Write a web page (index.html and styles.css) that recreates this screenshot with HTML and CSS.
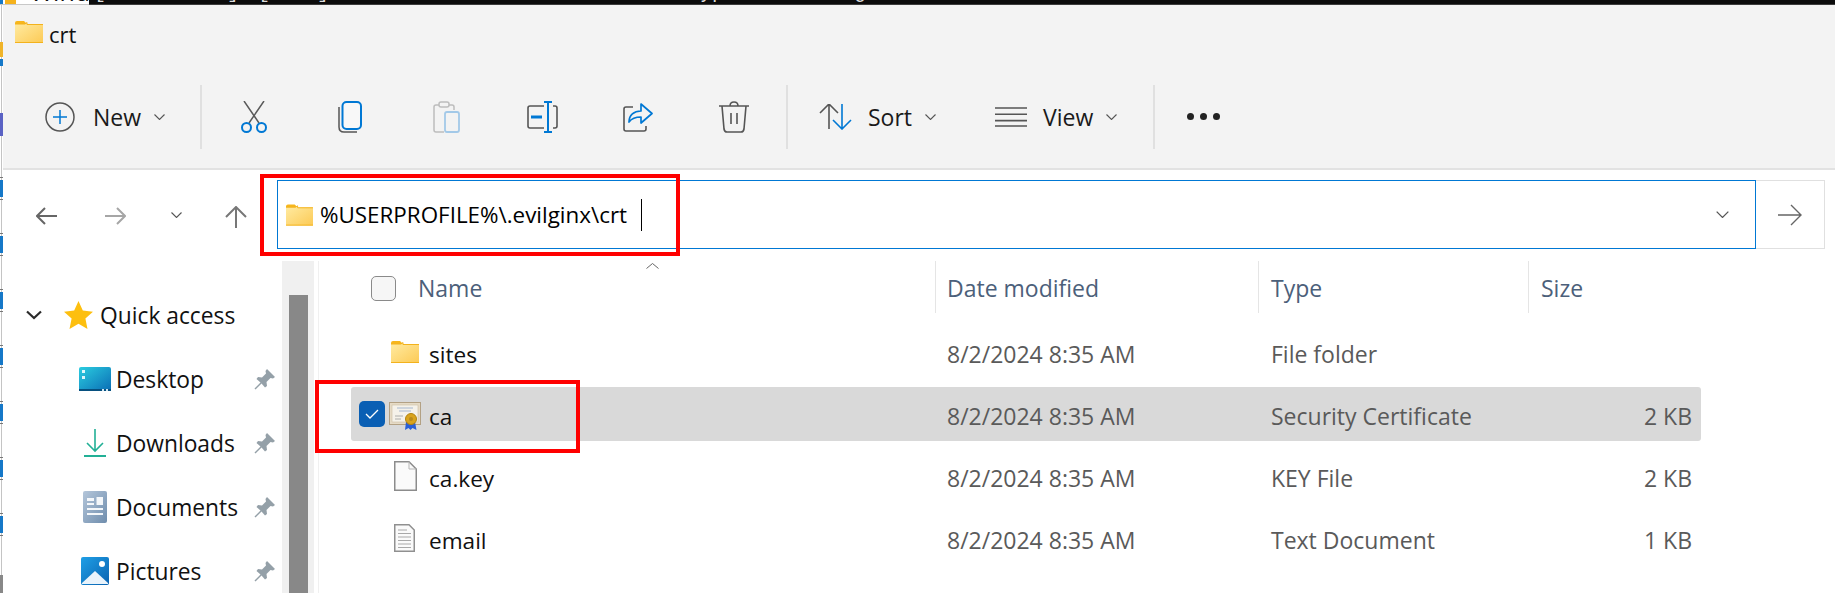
FILE: index.html
```html
<!DOCTYPE html>
<html lang="en">
<head>
    <meta charset="UTF-8">
    <title>crt</title>
    <link rel="stylesheet" href="styles.css">
</head>
<body>
    <svg class="defs" width="0" height="0">
        <defs>
            <linearGradient id="folderFill" x1="0" y1="0" x2="1" y2="1">
                <stop offset="0" stop-color="#ffeaa0"/>
                <stop offset="1" stop-color="#fcca55"/>
            </linearGradient>
            <linearGradient id="deskFill" x1="0" y1="0" x2="1" y2="1">
                <stop offset="0" stop-color="#2bcde0"/>
                <stop offset="1" stop-color="#0a6db5"/>
            </linearGradient>
            <linearGradient id="docFill" x1="0" y1="0" x2="1" y2="1">
                <stop offset="0" stop-color="#b4c6da"/>
                <stop offset="1" stop-color="#6f8dad"/>
            </linearGradient>
            <linearGradient id="picFill" x1="0" y1="0" x2="1" y2="1">
                <stop offset="0" stop-color="#1f9fe6"/>
                <stop offset="1" stop-color="#0a62b0"/>
            </linearGradient>
            <symbol id="folder" viewBox="0 0 28 22">
                <path d="M0 2 Q0 0 2 0 H9 L12 3 H0 Z" fill="#f7b61c"/>
                <path d="M0 3 H27 Q28 3 28 4 V21 Q28 22 27 22 H1 Q0 22 0 21 Z" fill="url(#folderFill)"/>
                <path d="M0 3 H10 L12 1.500 V3.500 H28 M0 21.500 H28" fill="none" stroke="#f3b21c" stroke-width="1"/>
            </symbol>
            <symbol id="pin" viewBox="0 0 21 21">
                <path d="M13 0 L21 8 L19 9.500 L16.500 9 L12.500 13 L13 17 L11 18.500 L7.500 14.500 L1.500 20.500 L0.500 19.500 L6.500 13.500 L2.500 10 L4 8 L8 8.500 L12 4.500 L11.500 2 Z" fill="#94a0a8"/>
            </symbol>
            <symbol id="chev" viewBox="0 0 11 6">
                <path d="M0.500 0.500 L5.500 5.500 L10.500 0.500" fill="none" stroke="#555" stroke-width="1.100"/>
            </symbol>
        </defs>
    </svg>

    <div class="top-strip">
        <div class="strip-left">
            <span class="strip-icon"></span>
            <span class="strip-title">Windows</span>
        </div>
        <div class="strip-term">
            <span class="t-a">[</span><span class="t-b">]</span><span class="t-c">[</span><span class="t-d">]</span><span class="t-e">Type</span><span class="t-f">g</span>
        </div>
    </div>

    <div class="main">
        <div class="edge">
            <i class="e-yellow"></i>
            <i class="e-blue"></i>
            <i class="e-purple"></i>
            <i class="tile"></i><i class="tile"></i><i class="tile"></i><i class="tile"></i><i class="tile"></i><i class="tile"></i><i class="tile"></i>
            <i class="e-gray"></i>
        </div>

        <div class="window">
            <div class="titlebar">
                <svg class="ic-folder"><use href="#folder"/></svg>
                <span class="title-text">crt</span>
            </div>

            <div class="toolbar">
                <div class="tb-new">
                    <svg width="30" height="30" viewBox="0 0 30 30">
                        <circle cx="15" cy="15" r="14" fill="none" stroke="#555" stroke-width="1.500"/>
                        <path d="M15 8 V22 M8 15 H22" stroke="#0078d4" stroke-width="1.500"/>
                    </svg>
                    <span class="tb-label new-label">New</span>
                    <svg class="tb-chev"><use href="#chev"/></svg>
                </div>
                <div class="tb-sep"></div>
                <div class="tb-btn">
                    <svg width="28" height="32" viewBox="0 0 28 32">
                        <path d="M4 0 L19 22 M24 0 L9 22" fill="none" stroke="#5a5a5a" stroke-width="1.500"/>
                        <circle cx="6.500" cy="26.500" r="4.500" fill="none" stroke="#0078d4" stroke-width="2"/>
                        <circle cx="21.500" cy="26.500" r="4.500" fill="none" stroke="#0078d4" stroke-width="2"/>
                    </svg>
                </div>
                <div class="tb-btn">
                    <svg width="24" height="32" viewBox="0 0 24 32">
                        <path d="M1 6 V26 Q1 31 6 31 H19" fill="none" stroke="#555" stroke-width="1.500"/>
                        <rect x="4.500" y="1" width="18.500" height="27" rx="4" fill="#f8f8f8" stroke="#0078d4" stroke-width="2"/>
                    </svg>
                </div>
                <div class="tb-btn">
                    <svg width="27" height="32" viewBox="0 0 27 32">
                        <path d="M6 4 H3 Q1 4 1 6 V29 Q1 31 3 31 H11 M16 4 H19 Q21 4 21 6 V9" fill="none" stroke="#bdbdbd" stroke-width="1.500"/>
                        <rect x="6" y="1" width="10" height="5" rx="2" fill="none" stroke="#bdbdbd" stroke-width="1.500"/>
                        <rect x="12" y="11" width="14" height="20" rx="2" fill="none" stroke="#a3c9e8" stroke-width="1.800"/>
                    </svg>
                </div>
                <div class="tb-btn">
                    <svg width="31" height="32" viewBox="0 0 31 32">
                        <path d="M17 5 H3 Q1 5 1 7 V25 Q1 27 3 27 H17 M26 5 H28 Q30 5 30 7 V25 Q30 27 28 27 H26" fill="none" stroke="#555" stroke-width="1.600"/>
                        <path d="M17 1 H25 M21 1 V31 M17 31 H25" fill="none" stroke="#0078d4" stroke-width="2"/>
                        <path d="M4 16 H15" stroke="#0078d4" stroke-width="3"/>
                    </svg>
                </div>
                <div class="tb-btn">
                    <svg width="30" height="30" viewBox="0 0 30 30">
                        <path d="M10 5 H3 Q1 5 1 7 V27 Q1 29 3 29 H21 Q23 29 23 27 V24" fill="none" stroke="#555" stroke-width="1.600"/>
                        <path d="M6 20 C6 13 11 9 18 9 V2 L29 11.500 L18 21 V15 C13 15 9 16 6 20 Z" fill="none" stroke="#0078d4" stroke-width="1.700" stroke-linejoin="round"/>
                    </svg>
                </div>
                <div class="tb-btn">
                    <svg width="30" height="32" viewBox="0 0 30 32">
                        <path d="M0 5 H30 M11 5 Q11 1 15 1 Q19 1 19 5 M3 5 L5 28 Q5.500 31 8 31 H22 Q24.500 31 25 28 L27 5 M12 12 V23 M18 12 V23" fill="none" stroke="#555" stroke-width="1.600"/>
                    </svg>
                </div>
                <div class="tb-sep"></div>
                <svg class="ic-sort" width="33" height="26" viewBox="0 0 33 26">
                    <path d="M1 10 L10 1 L19 10 M10 1 V26" fill="none" stroke="#555" stroke-width="1.600" transform="translate(0 -1)"/>
                    <path d="M14 16 L23 25 L32 16 M23 25 V0" fill="none" stroke="#0078d4" stroke-width="1.600"/>
                </svg>
                <span class="tb-label sort-label">Sort</span>
                <svg class="tb-chev"><use href="#chev"/></svg>
                <svg class="ic-view" width="32" height="20" viewBox="0 0 32 20">
                    <path d="M0 1 H32 M0 7.300 H32 M0 13.600 H32 M0 19 H32" stroke="#555" stroke-width="1.600"/>
                </svg>
                <span class="tb-label view-label">View</span>
                <svg class="tb-chev"><use href="#chev"/></svg>
                <div class="tb-sep sep-view"></div>
                <div class="tb-dots"><i></i><i></i><i></i></div>
            </div>

            <div class="nav">
                <svg class="nav-back" width="21" height="18" viewBox="0 0 21 18">
                    <path d="M21 9 H1 M9 1 L1 9 L9 17" fill="none" stroke="#666" stroke-width="2"/>
                </svg>
                <svg class="nav-fwd" width="21" height="18" viewBox="0 0 21 18">
                    <path d="M0 9 H20 M12 1 L20 9 L12 17" fill="none" stroke="#a6a6a6" stroke-width="2"/>
                </svg>
                <svg class="nav-chev" width="11" height="6"><use href="#chev"/></svg>
                <svg class="nav-up" width="22" height="22" viewBox="0 0 22 22">
                    <path d="M11 22 V1 M1 11 L11 1 L21 11" fill="none" stroke="#777" stroke-width="2"/>
                </svg>
                <div class="address">
                    <svg class="ic-addr"><use href="#folder"/></svg>
                    <span class="addr-text">%USERPROFILE%\.evilginx\crt</span>
                    <i class="caret"></i>
                    <svg class="addr-chev"><use href="#chev"/></svg>
                </div>
                <div class="go">
                    <svg width="24" height="22" viewBox="0 0 24 22">
                        <path d="M0 11 H23 M13 1 L23 11 L13 21" fill="none" stroke="#666" stroke-width="1.400"/>
                    </svg>
                </div>
            </div>

            <div class="content">
                <div class="sidebar">
                    <div class="side-head">
                        <svg class="side-chev" width="16" height="10" viewBox="0 0 16 10">
                            <path d="M1 1.500 L8 8 L15 1.500" fill="none" stroke="#2b2b2b" stroke-width="2.200"/>
                        </svg>
                        <svg class="side-star" width="29" height="28" viewBox="0 0 29 28">
                            <path d="M14.500 0 L18.800 9.600 L29 10.700 L21.400 17.600 L23.500 28 L14.500 22.700 L5.500 28 L7.600 17.600 L0 10.700 L10.200 9.600 Z" fill="#fdbf0f"/>
                        </svg>
                        <span>Quick access</span>
                    </div>
                    <div class="side-item">
                        <span class="side-icon">
                            <svg width="32" height="24" viewBox="0 0 32 24">
                                <rect width="32" height="24" rx="2" fill="url(#deskFill)"/>
                                <rect y="22" width="32" height="2" fill="#07507f"/>
                                <rect x="3" y="3" width="3" height="3" fill="#dff6fb"/>
                                <rect x="3" y="9" width="3" height="3" fill="#dff6fb"/>
                                <rect x="23" y="22" width="2" height="2" fill="#cfe8f5"/>
                                <rect x="27" y="22" width="2" height="2" fill="#cfe8f5"/>
                            </svg>
                        </span>
                        <span>Desktop</span>
                        <svg class="pin"><use href="#pin"/></svg>
                    </div>
                    <div class="side-item">
                        <span class="side-icon">
                            <svg width="22" height="28" viewBox="0 0 22 28">
                                <path d="M11 0 V21 M3 14 L11 22 L19 14" fill="none" stroke="#22b096" stroke-width="1.600"/>
                                <path d="M0 27 H22" stroke="#22b096" stroke-width="2"/>
                            </svg>
                        </span>
                        <span>Downloads</span>
                        <svg class="pin"><use href="#pin"/></svg>
                    </div>
                    <div class="side-item">
                        <span class="side-icon">
                            <svg width="24" height="32" viewBox="0 0 24 32">
                                <rect width="24" height="32" rx="2" fill="url(#docFill)"/>
                                <path d="M4 7 H11 V10 H4 Z M4 12 H11 V14 H4 Z M13.500 6 H20 V14 H13.500 Z M4 17 H20 V19 H4 Z M4 22 H20 V24 H4 Z" fill="#f4f7fa"/>
                            </svg>
                        </span>
                        <span>Documents</span>
                        <svg class="pin"><use href="#pin"/></svg>
                    </div>
                    <div class="side-item">
                        <span class="side-icon">
                            <svg width="28" height="28" viewBox="0 0 28 28">
                                <rect width="28" height="28" rx="2" fill="url(#picFill)"/>
                                <circle cx="21" cy="7" r="3" fill="#fff"/>
                                <path d="M1 26 L14 14 L27 26 V27 H1 Z" fill="#e9f3fb"/>
                            </svg>
                        </span>
                        <span>Pictures</span>
                        <svg class="pin"><use href="#pin"/></svg>
                    </div>
                </div>

                <div class="scroll-track"><div class="scroll-thumb"></div></div>

                <div class="list">
                    <div class="list-head">
                        <div class="col-name">
                            <i class="head-check"></i>
                            <span>Name</span>
                            <svg class="sort-caret" width="13" height="6" viewBox="0 0 13 6">
                                <path d="M0.500 5.500 L6.500 0.500 L12.500 5.500" fill="none" stroke="#666" stroke-width="1"/>
                            </svg>
                        </div>
                        <div class="col-head">Date modified</div>
                        <div class="col-head">Type</div>
                        <div class="col-head">Size</div>
                    </div>

                    <div class="file-row">
                        <div class="file-name">
                            <svg class="ic-file-folder"><use href="#folder"/></svg>
                            <span>sites</span>
                        </div>
                        <div class="cell">8/2/2024 8:35 AM</div>
                        <div class="cell">File folder</div>
                        <div class="cell cell-size"></div>
                    </div>

                    <div class="file-row selected">
                        <div class="file-name">
                            <i class="row-check">
                                <svg width="14" height="10" viewBox="0 0 14 10">
                                    <path d="M1 5 L5 9 L13 1" fill="none" stroke="#fff" stroke-width="1.300"/>
                                </svg>
                            </i>
                            <svg class="ic-cert" width="32" height="28" viewBox="0 0 32 28">
                                <rect x="0.500" y="0.500" width="31" height="22" fill="#e6dbc6" stroke="#b3a184"/>
                                <rect x="3" y="3" width="26" height="17" fill="#f5f2ea" stroke="#cbbda2" stroke-width="0.600"/>
                                <path d="M8 6 H24 M10 9 H22" stroke="#9fb0cc" stroke-width="0.900"/>
                                <path d="M6 14 H14 M6 17 H12" stroke="#a5a5a5" stroke-width="0.900"/>
                                <path d="M17 20 L16 28 L19.500 26 L21.500 28 L23.500 26 L27.500 28 L26 20 Z" fill="#2a5fd6"/>
                                <circle cx="22" cy="17" r="5.500" fill="#d9a31c" stroke="#b2830f"/>
                                <circle cx="22" cy="17" r="2" fill="#b98a1a"/>
                            </svg>
                            <span>ca</span>
                        </div>
                        <div class="cell">8/2/2024 8:35 AM</div>
                        <div class="cell">Security Certificate</div>
                        <div class="cell cell-size">2 KB</div>
                    </div>

                    <div class="file-row">
                        <div class="file-name">
                            <svg class="ic-page" width="23" height="30" viewBox="0 0 23 30">
                                <path d="M0.750 0.750 H15 L22.250 8 V29.250 H0.750 Z" fill="#fafafa" stroke="#8c8c8c" stroke-width="1.500"/>
                                <path d="M15 0.750 V8 H22.250" fill="none" stroke="#b5b5b5"/>
                            </svg>
                            <span>ca.key</span>
                        </div>
                        <div class="cell">8/2/2024 8:35 AM</div>
                        <div class="cell">KEY File</div>
                        <div class="cell cell-size">2 KB</div>
                    </div>

                    <div class="file-row">
                        <div class="file-name">
                            <svg class="ic-text" width="21" height="28" viewBox="0 0 21 28">
                                <path d="M0.750 0.750 H15 L20.250 6 V27.250 H0.750 Z" fill="#fafafa" stroke="#909090" stroke-width="1.500"/>
                                <path d="M4 6 H13 M4 9.500 H17 M4 13 H17 M4 16.500 H17 M4 20 H17 M4 23.500 H17" stroke="#a8a8a8" stroke-width="1"/>
                            </svg>
                            <span>email</span>
                        </div>
                        <div class="cell">8/2/2024 8:35 AM</div>
                        <div class="cell">Text Document</div>
                        <div class="cell cell-size">1 KB</div>
                    </div>
                </div>
            </div>
        </div>
    </div>

    <div class="mark mark-address"></div>
    <div class="mark mark-file"></div>
</body>
</html>
```

FILE: styles.css
```css
* {
    box-sizing: border-box;
}
html, body {
    margin: 0;
    height: 593px;
    overflow: hidden;
}
body {
    position: relative;
    font-family: 'Open Sans', 'Noto Sans', sans-serif;
    font-size: 22.8px;
    color: #111;
    background-color: #fff;
}
svg {
    display: block;
    flex: none;
}
.defs {
    position: absolute;
}

/* what shows of the windows behind */
.top-strip {
    display: flex;
    height: 5px;
    overflow: hidden;
}
.strip-left {
    display: flex;
    width: 89px;
    flex: none;
    overflow: hidden;
    border-bottom: 1px solid #c8c8c8;
}
.strip-icon {
    width: 16px;
    height: 4px;
    flex: none;
    background: linear-gradient(90deg, #1578c8 3px, #fff 3px, #fff 5px, #f5b21c 5px);
}
.strip-title {
    margin: -26px 0 0 14px;
    font-size: 25px;
    line-height: 34px;
    white-space: nowrap;
}
.strip-term {
    display: flex;
    flex: 1;
    background-color: #0c0c0c;
    border-bottom: 1px solid #3c3c3c;
    color: #ddd;
    font-family: 'Liberation Mono', monospace;
    font-size: 20px;
}
.strip-term span {
    margin-top: -17px;
    line-height: 20px;
}
.strip-term .t-a { margin-left: 5px; }
.strip-term .t-b { margin-left: 121px; }
.strip-term .t-c { margin-left: 19px; }
.strip-term .t-d { margin-left: 47px; }
.strip-term .t-e { margin-left: 359px; }
.strip-term .t-f { margin-left: 118px; }

.main {
    display: flex;
    height: 588px;
}
.edge {
    display: flex;
    flex-direction: column;
    width: 3px;
    background: linear-gradient(90deg, #fff 1px, #c4c4c4 1px, #c4c4c4 2px, #fff 2px);
    flex: none;
}
.edge i {
    display: block;
    flex: none;
    width: 3px;
}
.edge .e-yellow {
    height: 15px;
    margin-top: 37px;
    background-color: #f0b429;
}
.edge .e-blue {
    height: 7px;
    margin-top: 2px;
    background-color: #1578c8;
}
.edge .e-purple {
    height: 23px;
    margin-top: 47px;
    background-color: #5a62c4;
}
.edge .tile {
    height: 23px;
    margin-bottom: 33px;
    padding: 2px 0;
    border-top: 1px solid #777;
    border-bottom: 1px solid #777;
    background-color: #1578c8;
    background-clip: content-box;
}
.edge .e-purple + .tile {
    margin-top: 41px;
}
.edge .e-gray {
    height: 18px;
    margin-top: auto;
    background-color: #888;
}

.window {
    flex: 1;
    min-width: 0;
    display: flex;
    flex-direction: column;
}

.titlebar {
    display: flex;
    align-items: center;
    height: 60px;
    padding: 0 0 6px 12px;
    background-color: #f3f3f3;
}
.ic-folder {
    width: 28px;
    height: 22px;
}
.title-text {
    margin: 3px 0 0 6px;
    font-size: 22px;
}

.toolbar {
    display: flex;
    align-items: center;
    height: 105px;
    padding-left: 42px;
    background-color: #f3f3f3;
    border-bottom: 2px solid #e2e2e2;
}
.tb-new {
    display: flex;
    align-items: center;
    width: 151px;
}
.tb-label {
    font-size: 23px;
    color: #1a1a1a;
}
.new-label {
    margin-left: 18px;
}
.tb-chev {
    width: 11px;
    height: 6px;
    margin-left: 13px;
}
.tb-sep {
    width: 2px;
    height: 64px;
    margin: 0 4px;
    background-color: #e0e0e0;
}
.tb-btn {
    display: flex;
    justify-content: center;
    width: 96px;
}
.ic-sort {
    margin-left: 27px;
}
.sort-label {
    margin-left: 16px;
}
.ic-view {
    margin-left: 59px;
}
.view-label {
    margin-left: 16px;
}
.tb-sep.sep-view {
    margin-left: 36px;
}
.tb-dots {
    display: flex;
    gap: 6px;
    margin-left: 28px;
}
.tb-dots i {
    width: 7px;
    height: 7px;
    border-radius: 50%;
    background-color: #222;
}

.nav {
    display: flex;
    align-items: flex-start;
    height: 91px;
    flex: none;
    padding-top: 10px;
}
.nav-back {
    margin: 27px 0 0 33px;
}
.nav-fwd {
    margin: 27px 0 0 48px;
}
.nav-chev {
    margin: 32px 0 0 45px;
}
.nav-up {
    margin: 26px 0 0 43px;
}
.address {
    display: flex;
    align-items: center;
    width: 1479px;
    height: 69px;
    margin-left: 30px;
    padding-left: 8px;
    border: 1.5px solid #0078d4;
}
.ic-addr {
    width: 27px;
    height: 22px;
}
.addr-text {
    margin-left: 7px;
    font-size: 22.4px;
    color: #000;
}
.caret {
    width: 1px;
    height: 32px;
    margin-left: 14px;
    background-color: #000;
}
.addr-chev {
    width: 13px;
    height: 7px;
    margin-left: auto;
    margin-right: 26px;
}
.go {
    display: flex;
    align-items: center;
    justify-content: center;
    width: 69px;
    height: 69px;
    border: 1px solid #e0e0e0;
    border-left: none;
}

.content {
    display: flex;
    flex: 1;
    min-height: 0;
}
.sidebar {
    width: 279px;
    padding-top: 22px;
    flex: none;
}
.side-head, .side-item {
    display: flex;
    align-items: center;
    height: 64px;
}
.side-chev {
    margin-left: 23px;
}
.side-star {
    margin-left: 22px;
}
.side-head span {
    margin-left: 7px;
}
.side-icon {
    display: flex;
    justify-content: center;
    width: 32px;
    margin: 0 5px 0 76px;
}
.pin {
    width: 21px;
    height: 21px;
    margin-left: auto;
    margin-right: 7px;
}
.scroll-track {
    width: 32px;
    padding: 34px 6px 0 7px;
    background-color: #f0f0f0;
    flex: none;
}
.scroll-thumb {
    height: 100%;
    background-color: #888;
}

.list {
    flex: 1;
    min-width: 0;
    position: relative;
}
.list::before {
    content: "";
    position: absolute;
    left: 4px;
    top: 0;
    bottom: 0;
    width: 1px;
    background-color: #f0f0f0;
}
.list-head {
    display: grid;
    grid-template-columns: 621px 323px 270px 181px;
    width: 1395px;
    height: 52px;
    margin-bottom: 12px;
    color: #4c607a;
    font-size: 23px;
}
.col-name {
    position: relative;
    display: flex;
    align-items: center;
    padding-top: 2px;
}
.col-name span {
    margin-left: 22px;
}
.head-check {
    width: 25px;
    height: 25px;
    margin: 1px 0 0 57px;
    border: 1.5px solid #8a8a8a;
    border-radius: 5px;
    background-color: #f6f6f6;
}
.sort-caret {
    position: absolute;
    left: 332px;
    top: 2px;
}
.col-head {
    display: flex;
    align-items: center;
    padding: 2px 0 0 11px;
    border-left: 1px solid #e5e5e5;
}
.col-head + .col-head {
    padding-left: 12px;
}
.file-row {
    display: grid;
    grid-template-columns: 584px 324px 269px 173px;
    width: 1350px;
    height: 54px;
    margin: 0 0 8px 37px;
    border-radius: 3px;
}
.selected {
    background-color: #d9d9d9;
}
.file-name {
    display: flex;
    align-items: center;
    padding: 4px 0 0 78px;
    font-size: 22.6px;
}
.ic-file-folder {
    width: 28px;
    height: 22px;
    margin: -4px 10px 0 -38px;
}
.cell {
    display: flex;
    align-items: center;
    padding: 4px 0 0 12px;
    color: #5a5a5a;
    font-size: 23px;
}
.cell-size {
    justify-content: flex-end;
    padding: 4px 9px 0 0;
}
.row-check {
    display: flex;
    align-items: center;
    justify-content: center;
    width: 26px;
    height: 26px;
    margin: -4px 4px 0 -70px;
    border-radius: 5px;
    background-color: #0a5fb4;
    flex: none;
}
.ic-cert {
    margin: -1px 8px 0 0;
}
.ic-page {
    margin: -4px 12px 0 -35px;
}
.ic-text {
    margin: -4px 14px 0 -35px;
}

/* red boxes drawn over the screenshot */
.mark {
    position: absolute;
    border: 4px solid #f00;
}
.mark-address {
    left: 260px;
    top: 174px;
    width: 420px;
    height: 82px;
}
.mark-file {
    left: 315px;
    top: 380px;
    width: 265px;
    height: 73px;
}
```
